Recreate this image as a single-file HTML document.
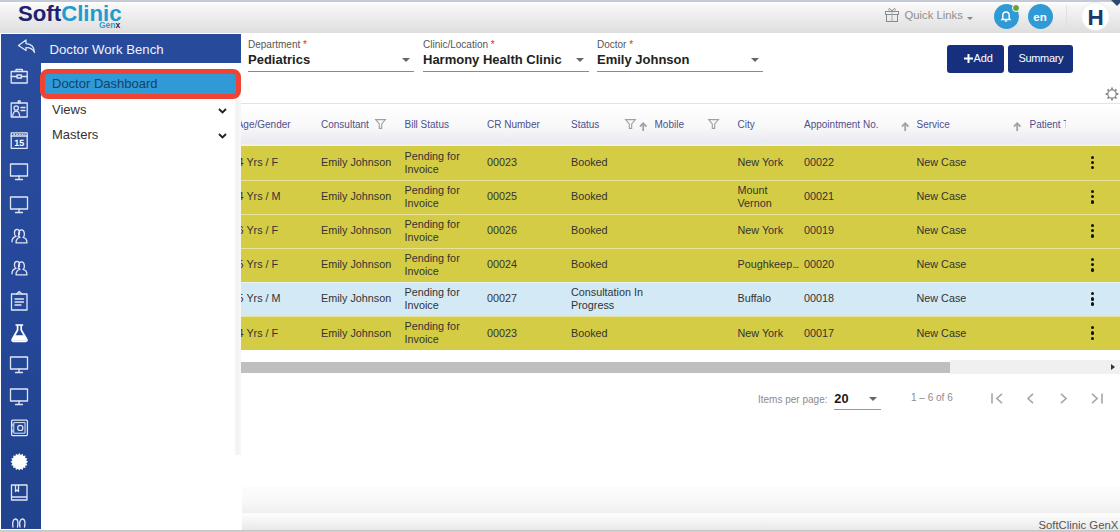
<!DOCTYPE html>
<html><head><meta charset="utf-8">
<style>
*{margin:0;padding:0;box-sizing:border-box}
html,body{width:1120px;height:532px;overflow:hidden;background:#fff;font-family:"Liberation Sans",sans-serif;position:relative}
.abs{position:absolute}
#topstrip{left:0;top:0;width:1120px;height:2px;background:#c4cbd6}
#header{left:0;top:2px;width:1120px;height:31px;background:linear-gradient(#ffffff 0,#f7f7f7 12%,#ececec 50%,#dedede 100%)}
#logo{left:18px;top:2.4px;font-weight:bold;font-size:22.2px;letter-spacing:0;line-height:24px}
#logo .s{color:#1d2270}
#logo .c{color:#1e9ccf}
#genx{left:99px;top:20px;font-size:8.5px;font-weight:bold;color:#2a9fd0;line-height:10px}
#sidebar{left:1px;top:34px;width:40px;height:495px;background:linear-gradient(#2a4c9c,#25489a 50%,#21428c)}
#flyhead{left:41px;top:34px;width:200px;height:29px;background:#284a9b;color:#eef2fb;font-size:13.2px;line-height:31px;padding-left:8.5px}
#flypanel{left:41px;top:63px;width:200px;height:392px;background:linear-gradient(#fff,#fff) 0 0/200px 37px no-repeat,linear-gradient(90deg,#fff 0,#fff 193px,#f1f1f1 195.5px,#f7f7f7 200px)}
#flybottom{left:41px;top:455px;width:201px;height:75px;background:#fff}
.menu{font-size:13px;color:#333;line-height:16px}
#dd{left:40.3px;top:68.6px;width:200.5px;height:30.2px;border:5.3px solid #ef4433;border-radius:8px;background:#2f9ad6}
#ddt{left:52px;top:76px;color:#17406d}
.chev{width:5.5px;height:5.5px;border-right:1.8px solid #333;border-bottom:1.8px solid #333;transform:rotate(45deg)}
#main-sep{left:241px;top:103px;width:879px;height:1px;background:#e3e3e3}
.lbl{font-size:10px;color:#555;line-height:12px}
.lbl b{color:#c0392b;font-weight:normal}
.val{font-size:13px;font-weight:bold;color:#222;line-height:15px}
.uline{height:1px;background:#8a8a8a}
.tri{width:0;height:0;border-left:4.5px solid transparent;border-right:4.5px solid transparent;border-top:4.5px solid #666}
.btn{background:#17307e;border-radius:3px;color:#fff;font-size:12px;line-height:28px;text-align:center}
#thead{left:241px;top:104px;width:879px;height:42px;background:linear-gradient(#ffffff,#f8f8f9 55%,#e9e9f1 92%,#f4f4ee)}
.th{font-size:10px;color:#4f4f8d;line-height:12px}
.row{left:241px;width:879px;height:34px}
.y{background:#d5cc45}
.b{background:#d3e9f5}
.sep{left:241px;width:879px;height:1px;background:#e8e0a8}
.td{font-size:10.8px;color:#333;line-height:13px}
.kebab{width:3px}
.kebab i{display:block;width:3.4px;height:3.4px;border-radius:50%;background:#111;margin-bottom:1.9px}
#track{left:950px;top:360px;width:170px;height:14px;background:#f0f0f0}
#thumb{left:241px;top:362px;width:709px;height:11px;background:#bfbfbf}
.pg{font-size:10px;color:#8c8c8c}
#footgrad{left:242px;top:487px;width:878px;height:26px;background:linear-gradient(#fcfcfc,#f9f9f9 50%,#efefef)}
#footline{left:242px;top:513px;width:878px;height:1px;background:#fafafa}
#foot{left:242px;top:514px;width:878px;height:16px;background:linear-gradient(#fdfdfd,#e9e9e9)}
#bottomline{left:0;top:529.5px;width:1120px;height:3px;background:linear-gradient(#c4c4c4,#d8d8d8)}
svg{position:absolute;overflow:visible}
</style></head><body>
<div id="topstrip" class="abs"></div>
<div id="header" class="abs"></div>
<div id="logo" class="abs"><span class="s">Soft</span><span class="c">Clinic</span></div>
<div id="genx" class="abs">Gen<span style="color:#1d2270">x</span></div>

<!-- header right -->
<svg style="left:884.5px;top:7px" width="15" height="15" viewBox="0 0 15 15" fill="none" stroke="#8a8a8a" stroke-width="1">
 <rect x="0.5" y="4.5" width="13" height="3"/><rect x="1.5" y="7.5" width="11" height="7"/><line x1="7" y1="4.5" x2="7" y2="14.5" stroke="#9ab"/>
 <path d="M7 4.5 C5 0.5 3 1 4 3.5 M7 4.5 C9 0.5 11 1 10 3.5"/>
</svg>
<div class="abs" style="left:904.5px;top:8.2px;font-size:11.3px;color:#8f8f8f;line-height:14px">Quick Links</div>
<div class="abs tri" style="left:967px;top:17px;border-width:3px 3px 0 3px;border-top-color:#888"></div>
<div class="abs" style="left:993.8px;top:4.3px;width:25px;height:25px;border-radius:50%;background:#2f9ad6"></div>
<svg style="left:1000px;top:10px" width="12" height="13" viewBox="0 0 12 13" fill="none" stroke="#fff" stroke-width="1.4">
 <path d="M2 9.5 L2.8 8.5 V5.5 C2.8 3.4 4.2 2 6 2 C7.8 2 9.2 3.4 9.2 5.5 V8.5 L10 9.5 Z"/><path d="M4.8 11 H7.2"/>
</svg>
<div class="abs" style="left:1011.7px;top:3.5px;width:8px;height:8px;border-radius:50%;background:#6a9e3c;border:1.2px solid #fff"></div>
<div class="abs" style="left:1027.5px;top:4.3px;width:25px;height:25px;border-radius:50%;background:#2f9ad6;color:#fff;font-weight:bold;font-size:11.5px;line-height:27px;text-align:center">en</div>
<div class="abs" style="left:1066px;top:5px;width:1px;height:23px;background:#e0e0e0"></div>
<div class="abs" style="left:1081px;top:2px;width:29px;height:29px;border-radius:50%;background:#fff;border:1px solid #eee;color:#173a6b;font-weight:bold;font-size:22.5px;line-height:29px;text-align:center">H</div>
<div class="abs" style="left:1111px;top:0;width:0;height:0;border-left:6px solid transparent;border-right:6px solid transparent;border-top:6px solid #2f4a70"></div>

<!-- sidebar -->
<div id="sidebar" class="abs"></div>
<div id="flyhead" class="abs">Doctor Work Bench</div>
<div id="flypanel" class="abs"></div>
<div id="flybottom" class="abs"></div>
<div id="dd" class="abs"></div>
<div id="ddt" class="abs menu">Doctor Dashboard</div>
<div class="abs menu" style="left:52px;top:102px">Views</div>
<div class="abs menu" style="left:52px;top:127px">Masters</div>
<svg style="left:217.5px;top:108px" width="9" height="6" viewBox="0 0 9 6" fill="none" stroke="#222" stroke-width="1.9"><path d="M1 1 L4.5 4.5 L8 1"/></svg>
<svg style="left:217.5px;top:133px" width="9" height="6" viewBox="0 0 9 6" fill="none" stroke="#222" stroke-width="1.9"><path d="M1 1 L4.5 4.5 L8 1"/></svg>

<!-- filters -->
<div class="abs lbl" style="left:248px;top:39px">Department <b>*</b></div>
<div class="abs val" style="left:248px;top:52px">Pediatrics</div>
<div class="abs tri" style="left:402px;top:58px"></div>
<div class="abs uline" style="left:248px;top:71px;width:166px"></div>
<div class="abs lbl" style="left:423px;top:39px">Clinic/Location <b>*</b></div>
<div class="abs val" style="left:423px;top:52px">Harmony Health Clinic</div>
<div class="abs tri" style="left:576px;top:58px"></div>
<div class="abs uline" style="left:423px;top:71px;width:166px"></div>
<div class="abs lbl" style="left:597px;top:39px">Doctor <b>*</b></div>
<div class="abs val" style="left:597px;top:52px">Emily Johnson</div>
<div class="abs tri" style="left:751px;top:58px"></div>
<div class="abs uline" style="left:597px;top:71px;width:166px"></div>
<div class="abs btn" style="left:947px;top:45px;width:57px;height:28px"></div><svg style="left:964px;top:54px" width="9" height="9" viewBox="0 0 9 9" stroke="#fff" stroke-width="2"><path d="M4.5 0 V9 M0 4.5 H9"/></svg><div class="abs" style="left:973.5px;top:51px;font-size:11px;color:#fff;line-height:14px;letter-spacing:-0.1px">Add</div>
<div class="abs btn" style="left:1008px;top:45px;width:65px;height:28px"></div><div class="abs" style="left:1018.5px;top:51px;font-size:11px;color:#fff;line-height:14px;letter-spacing:-0.35px">Summary</div>

<div id="main-sep" class="abs"></div>
<div id="thead" class="abs"></div>
<div class="abs" style="left:241px;top:104px;width:879px;height:256px;overflow:hidden">
<div class="abs th" style="top:14.5px;left:-4.3px">Age/Gender</div>
<div class="abs th" style="top:14.5px;left:80px">Consultant</div>
<div class="abs th" style="top:14.5px;left:163.5px">Bill Status</div>
<div class="abs th" style="top:14.5px;left:246px">CR Number</div>
<div class="abs th" style="top:14.5px;left:330px">Status</div>
<div class="abs th" style="top:14.5px;left:413.5px">Mobile</div>
<div class="abs th" style="top:14.5px;left:496.5px">City</div>
<div class="abs th" style="top:14.5px;left:563px">Appointment No.</div>
<div class="abs th" style="top:14.5px;left:675.5px">Service</div>
<div class="abs th" style="top:14.5px;left:788.5px;width:36.5px;overflow:hidden;white-space:nowrap">Patient T</div>
<svg style="left:134px;top:14.6px" width="11" height="10" viewBox="0 0 11 10" fill="none" stroke="#a0a0a0" stroke-width="1.1"><path d="M0.6 0.6 H10.4 L6.7 5 V9.4 H4.3 V5 Z"/></svg>
<svg style="left:383.5px;top:14.6px" width="11" height="10" viewBox="0 0 11 10" fill="none" stroke="#a0a0a0" stroke-width="1.1"><path d="M0.6 0.6 H10.4 L6.7 5 V9.4 H4.3 V5 Z"/></svg>
<svg style="left:467px;top:14.6px" width="11" height="10" viewBox="0 0 11 10" fill="none" stroke="#a0a0a0" stroke-width="1.1"><path d="M0.6 0.6 H10.4 L6.7 5 V9.4 H4.3 V5 Z"/></svg>
<svg style="left:397.5px;top:18px" width="9" height="9" viewBox="0 0 9 9" fill="none" stroke="#a2a2a2" stroke-width="1.8" stroke-linejoin="miter"><path d="M4.2 9 V1.5 M0.9 4.6 L4.2 1.2 L7.5 4.6"/></svg>
<svg style="left:659.5px;top:18px" width="9" height="9" viewBox="0 0 9 9" fill="none" stroke="#a2a2a2" stroke-width="1.8" stroke-linejoin="miter"><path d="M4.2 9 V1.5 M0.9 4.6 L4.2 1.2 L7.5 4.6"/></svg>
<svg style="left:772px;top:18px" width="9" height="9" viewBox="0 0 9 9" fill="none" stroke="#a2a2a2" stroke-width="1.8" stroke-linejoin="miter"><path d="M4.2 9 V1.5 M0.9 4.6 L4.2 1.2 L7.5 4.6"/></svg>
<div class="abs y" style="left:0;top:41.5px;width:879px;height:34.1px">
<div class="abs td" style="left:-3.4px;top:10.5px;white-space:nowrap">4 Yrs / F</div>
<div class="abs td" style="left:80px;top:10.5px;white-space:nowrap">Emily Johnson</div>
<div class="abs td" style="left:163.5px;top:4px;white-space:nowrap">Pending for<br>Invoice</div>
<div class="abs td" style="left:246px;top:10.5px;white-space:nowrap">00023</div>
<div class="abs td" style="left:330px;top:10.5px;white-space:nowrap">Booked</div>
<div class="abs td" style="left:496.5px;top:10.5px;white-space:nowrap">New York</div>
<div class="abs td" style="left:563px;top:10.5px;white-space:nowrap">00022</div>
<div class="abs td" style="left:675.5px;top:10.5px;white-space:nowrap">New Case</div>
<div class="abs kebab" style="left:850px;top:10px"><i></i><i></i><i></i></div>
</div>
<div class="abs y" style="left:0;top:75.6px;width:879px;height:34.1px">
<div class="abs td" style="left:-3.4px;top:10.5px;white-space:nowrap">4 Yrs / M</div>
<div class="abs td" style="left:80px;top:10.5px;white-space:nowrap">Emily Johnson</div>
<div class="abs td" style="left:163.5px;top:4px;white-space:nowrap">Pending for<br>Invoice</div>
<div class="abs td" style="left:246px;top:10.5px;white-space:nowrap">00025</div>
<div class="abs td" style="left:330px;top:10.5px;white-space:nowrap">Booked</div>
<div class="abs td" style="left:496.5px;top:4px;white-space:nowrap">Mount<br>Vernon</div>
<div class="abs td" style="left:563px;top:10.5px;white-space:nowrap">00021</div>
<div class="abs td" style="left:675.5px;top:10.5px;white-space:nowrap">New Case</div>
<div class="abs kebab" style="left:850px;top:10px"><i></i><i></i><i></i></div>
</div>
<div class="abs" style="left:0;top:75.6px;width:879px;height:1px;background:rgba(255,255,255,0.45)"></div>
<div class="abs y" style="left:0;top:109.7px;width:879px;height:34.1px">
<div class="abs td" style="left:-3.4px;top:10.5px;white-space:nowrap">6 Yrs / F</div>
<div class="abs td" style="left:80px;top:10.5px;white-space:nowrap">Emily Johnson</div>
<div class="abs td" style="left:163.5px;top:4px;white-space:nowrap">Pending for<br>Invoice</div>
<div class="abs td" style="left:246px;top:10.5px;white-space:nowrap">00026</div>
<div class="abs td" style="left:330px;top:10.5px;white-space:nowrap">Booked</div>
<div class="abs td" style="left:496.5px;top:10.5px;white-space:nowrap">New York</div>
<div class="abs td" style="left:563px;top:10.5px;white-space:nowrap">00019</div>
<div class="abs td" style="left:675.5px;top:10.5px;white-space:nowrap">New Case</div>
<div class="abs kebab" style="left:850px;top:10px"><i></i><i></i><i></i></div>
</div>
<div class="abs" style="left:0;top:109.7px;width:879px;height:1px;background:rgba(255,255,255,0.45)"></div>
<div class="abs y" style="left:0;top:143.8px;width:879px;height:34.1px">
<div class="abs td" style="left:-3.4px;top:10.5px;white-space:nowrap">5 Yrs / F</div>
<div class="abs td" style="left:80px;top:10.5px;white-space:nowrap">Emily Johnson</div>
<div class="abs td" style="left:163.5px;top:4px;white-space:nowrap">Pending for<br>Invoice</div>
<div class="abs td" style="left:246px;top:10.5px;white-space:nowrap">00024</div>
<div class="abs td" style="left:330px;top:10.5px;white-space:nowrap">Booked</div>
<div class="abs td" style="left:496.5px;top:10.5px;white-space:nowrap">Poughkeep<span style="letter-spacing:-0.9px">...</span></div>
<div class="abs td" style="left:563px;top:10.5px;white-space:nowrap">00020</div>
<div class="abs td" style="left:675.5px;top:10.5px;white-space:nowrap">New Case</div>
<div class="abs kebab" style="left:850px;top:10px"><i></i><i></i><i></i></div>
</div>
<div class="abs" style="left:0;top:143.8px;width:879px;height:1px;background:rgba(255,255,255,0.45)"></div>
<div class="abs b" style="left:0;top:177.9px;width:879px;height:34.1px">
<div class="abs td" style="left:-3.4px;top:10.5px;white-space:nowrap">5 Yrs / M</div>
<div class="abs td" style="left:80px;top:10.5px;white-space:nowrap">Emily Johnson</div>
<div class="abs td" style="left:163.5px;top:4px;white-space:nowrap">Pending for<br>Invoice</div>
<div class="abs td" style="left:246px;top:10.5px;white-space:nowrap">00027</div>
<div class="abs td" style="left:330px;top:4px;white-space:nowrap">Consultation In<br>Progress</div>
<div class="abs td" style="left:496.5px;top:10.5px;white-space:nowrap">Buffalo</div>
<div class="abs td" style="left:563px;top:10.5px;white-space:nowrap">00018</div>
<div class="abs td" style="left:675.5px;top:10.5px;white-space:nowrap">New Case</div>
<div class="abs kebab" style="left:850px;top:10px"><i></i><i></i><i></i></div>
</div>
<div class="abs" style="left:0;top:177.9px;width:879px;height:1px;background:rgba(255,255,255,0.45)"></div>
<div class="abs y" style="left:0;top:212.0px;width:879px;height:34.1px">
<div class="abs td" style="left:-3.4px;top:10.5px;white-space:nowrap">4 Yrs / F</div>
<div class="abs td" style="left:80px;top:10.5px;white-space:nowrap">Emily Johnson</div>
<div class="abs td" style="left:163.5px;top:4px;white-space:nowrap">Pending for<br>Invoice</div>
<div class="abs td" style="left:246px;top:10.5px;white-space:nowrap">00023</div>
<div class="abs td" style="left:330px;top:10.5px;white-space:nowrap">Booked</div>
<div class="abs td" style="left:496.5px;top:10.5px;white-space:nowrap">New York</div>
<div class="abs td" style="left:563px;top:10.5px;white-space:nowrap">00017</div>
<div class="abs td" style="left:675.5px;top:10.5px;white-space:nowrap">New Case</div>
<div class="abs kebab" style="left:850px;top:10px"><i></i><i></i><i></i></div>
</div>
<div class="abs" style="left:0;top:212.0px;width:879px;height:1px;background:rgba(255,255,255,0.45)"></div>
</div>
<!-- scrollbar -->
<div id="track" class="abs"></div>
<div id="thumb" class="abs"></div>
<div class="abs" style="left:1111px;top:364px;width:0;height:0;border-top:3.5px solid transparent;border-bottom:3.5px solid transparent;border-left:4px solid #333"></div>
<!-- paginator -->
<div class="abs pg" style="left:758px;top:394px;line-height:12px">Items per page:</div>
<div class="abs" style="left:834.3px;top:391.5px;font-size:12.8px;font-weight:bold;color:#1a1a1a;line-height:14px">20</div>
<div class="abs tri" style="left:868.5px;top:397px"></div>
<div class="abs uline" style="left:834px;top:409px;width:47px;background:#999"></div>
<div class="abs pg" style="left:911px;top:392px;line-height:12px">1 – 6 of 6</div>
<svg style="left:991px;top:393px" width="13" height="11" viewBox="0 0 13 11" fill="none" stroke="#a6a6a6" stroke-width="1.6"><path d="M1 0.5 V10.5 M11 0.8 L5.8 5.5 L11 10.2"/></svg>
<svg style="left:1026.7px;top:393px" width="7" height="11" viewBox="0 0 7 11" fill="none" stroke="#a6a6a6" stroke-width="1.6"><path d="M6 0.8 L1 5.5 L6 10.2"/></svg>
<svg style="left:1060px;top:393px" width="7" height="11" viewBox="0 0 7 11" fill="none" stroke="#a6a6a6" stroke-width="1.6"><path d="M1 0.8 L6 5.5 L1 10.2"/></svg>
<svg style="left:1089.5px;top:393px" width="13" height="11" viewBox="0 0 13 11" fill="none" stroke="#a6a6a6" stroke-width="1.6"><path d="M12 0.5 V10.5 M2 0.8 L7.2 5.5 L2 10.2"/></svg>
<!-- settings gear -->
<svg style="left:1104.2px;top:86px" width="16" height="16" viewBox="0 0 16 16" fill="none" stroke="#8d8d8d"><circle cx="8" cy="8" r="4.2" stroke-width="1.3"/><path stroke-width="1.8" d="M12.00 8.00 L14.40 8.00 M10.83 10.83 L12.53 12.53 M8.00 12.00 L8.00 14.40 M5.17 10.83 L3.47 12.53 M4.00 8.00 L1.60 8.00 M5.17 5.17 L3.47 3.47 M8.00 4.00 L8.00 1.60 M10.83 5.17 L12.53 3.47"/></svg>
<!-- footer -->
<div id="footgrad" class="abs"></div>
<div id="footline" class="abs"></div>
<div id="foot" class="abs"></div>
<div class="abs" style="left:1038.5px;top:517.5px;font-size:11.3px;color:#555;line-height:14px">SoftClinic GenX</div>
<div id="bottomline" class="abs"></div>
<!-- sidebar icons -->
<svg style="left:0;top:34px" width="41" height="496" viewBox="0 34 41 496" fill="none" stroke="#dfe6f3" stroke-width="1.3" stroke-linejoin="round" stroke-linecap="round">
 <!-- back arrow -->
 <path d="M26 40 L18.5 45.5 L26 50.5 V47.6 C30 47.4 33 49 34.5 52.5 C34.3 47 31 43.8 26 43.6 Z" />
 <!-- briefcase -->
 <rect x="11.2" y="71.5" width="16" height="11.5"/><path d="M16 71.5 V69.5 H22.4 V71.5 M11.2 76.5 H17 M21.4 76.5 H27.2"/><rect x="17" y="75" width="4.4" height="3"/>
 <!-- id card -->
 <rect x="11.2" y="103" width="16" height="14"/><path d="M18.2 103 V101 H20.2 V103"/><circle cx="16.2" cy="108" r="2.2"/><path d="M12.8 115.5 C13.2 112.5 14.5 111.2 16.2 111.2 C17.9 111.2 19.2 112.5 19.6 115.5 M21 107.5 H25 M21 110.5 H25"/>
 <!-- calendar -->
 <rect x="11.2" y="132.8" width="16" height="15.5"/><path d="M11.2 136 H27.2"/><path d="M13.5 134.4 H25" stroke-dasharray="1.2 1.6" stroke-width="1"/>
 <!-- monitors -->
 <rect x="10.5" y="164" width="17" height="12"/><path d="M19 176 V179 M15.5 179.5 H22.5"/>
 <rect x="10.5" y="197" width="17" height="12"/><path d="M19 209 V212 M15.5 212.5 H22.5"/>
 <!-- people -->
 <g transform="translate(0 -1.2)">
 <path d="M12 243 C12 239 14 238 16 237.5 C14 236.5 13.5 230.5 17 230.5 C20.5 230.5 20 236.5 18 237.5 M16 244 H27 C27 240 25.5 239 23 238.5 C25 237.5 25 231 21.5 231 C18 231 18 237.5 20 238.5 C17.5 239 16 240 16 244"/>
 <path d="M12 275 C12 271 14 270 16 269.5 C14 268.5 13.5 262.5 17 262.5 C20.5 262.5 20 268.5 18 269.5 M16 276 H27 C27 272 25.5 271 23 270.5 C25 269.5 25 263 21.5 263 C18 263 18 269.5 20 270.5 C17.5 271 16 272 16 276"/>
 </g>
 <!-- clipboard -->
 <rect x="11.5" y="294" width="15.5" height="16"/><path d="M16.5 294 L19.2 291.5 L22 294 M15 299 H23.5 M15 302 H23.5 M15 305 H21"/>
 <!-- monitors -->
 <rect x="10.5" y="357" width="17" height="12"/><path d="M19 369 V372 M15.5 372.5 H22.5"/>
 <rect x="10.5" y="389" width="17" height="12"/><path d="M19 401 V404 M15.5 404.5 H22.5"/>
 <!-- safe -->
 <rect x="11.6" y="420.2" width="15.8" height="15.4" rx="1"/><rect x="14.2" y="422.6" width="10.8" height="10.6" stroke-width="1"/><circle cx="20.3" cy="427.9" r="2.6" stroke-width="1.2"/><path d="M12.8 424 V426 M12.8 430 V432" stroke-width="1"/>
 <!-- book -->
 <path d="M11.5 485 H27 V500 H11.5 Z M11.5 497 H27 M15.5 485 V491.5 L17 490 L18.5 491.5 V485"/>
 <!-- teeth -->
 <path d="M13 527 C12 523 13 519 15.5 519 C18 519 18.5 523 17.5 527 M20 527 C19 523 20 519 22.5 519 C25 519 25.5 523 24.5 527"/>
</svg>
<svg style="left:0;top:0" width="41" height="532" viewBox="0 0 41 532">
 <!-- flask -->
 <path d="M15.5 325 H23.2 M17.6 325.3 V330 L12.2 339.5 Q11.6 341.3 13.4 341.3 H25.6 Q27.4 341.3 26.8 339.5 L21.2 330 V325.3" fill="none" stroke="#fff" stroke-width="1.7" stroke-linejoin="round"/>
 <path d="M14.6 335.3 H24.4 L26.6 339.4 Q27 340.8 25.6 340.8 H13.4 Q12 340.8 12.4 339.4 Z" fill="#fff"/>
 <!-- badge -->
 <path fill="#fff" d="M19.30 453.00 L20.67 454.93 L22.67 453.67 L23.19 455.98 L25.52 455.58 L25.12 457.91 L27.43 458.43 L26.17 460.43 L28.10 461.80 L26.17 463.17 L27.43 465.17 L25.12 465.69 L25.52 468.02 L23.19 467.62 L22.67 469.93 L20.67 468.67 L19.30 470.60 L17.93 468.67 L15.93 469.93 L15.41 467.62 L13.08 468.02 L13.48 465.69 L11.17 465.17 L12.43 463.17 L10.50 461.80 L12.43 460.43 L11.17 458.43 L13.48 457.91 L13.08 455.58 L15.41 455.98 L15.93 453.67 L17.93 454.93 Z"/>
 <text x="19.3" y="145.6" font-family="Liberation Sans" font-size="9" font-weight="bold" fill="#fff" text-anchor="middle" style="text-rendering:geometricPrecision">15</text>
</svg>

</body></html>
